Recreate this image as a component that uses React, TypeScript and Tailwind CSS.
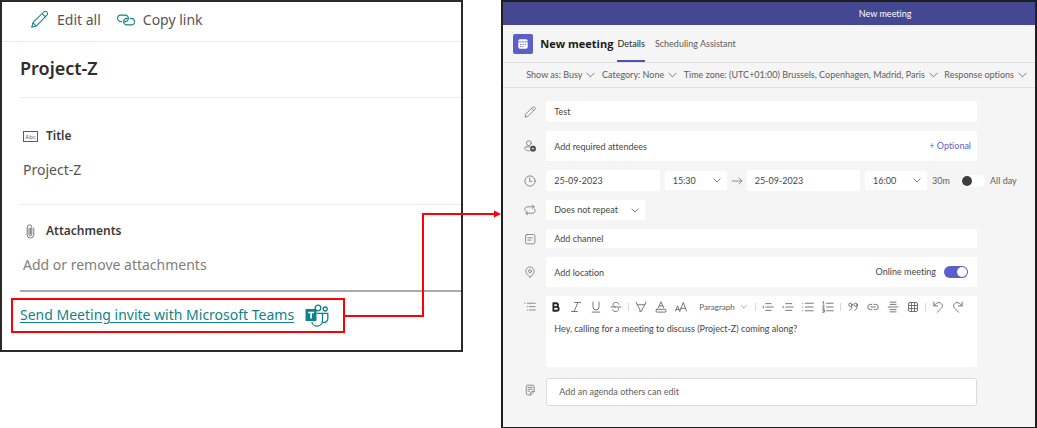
import type { ReactNode } from "react";

const TEAL = "#0f8387";

type IconProps = {
  children: ReactNode;
  className?: string;
  box?: string;
  stroke?: number;
};

function Icon({ children, className = "size-3", box = "0 0 16 16", stroke = 1.1 }: IconProps) {
  return (
    <svg
      aria-hidden="true"
      viewBox={box}
      className={`shrink-0 ${className}`}
      fill="none"
      stroke="currentColor"
      strokeWidth={stroke}
      strokeLinecap="round"
      strokeLinejoin="round"
    >
      {children}
    </svg>
  );
}

function Chevron({ className = "h-[6px] w-[9px]" }: { className?: string }) {
  return (
    <Icon box="0 0 10 6" className={className} stroke={0.9}>
      <path d="M1 1l4 4 4-4" />
    </Icon>
  );
}

function TeamsLogo() {
  return (
    <svg aria-hidden="true" viewBox="0 0 24 23" className="h-[23px] w-6 shrink-0" fill="none" stroke={TEAL} strokeWidth="1.3">
      <circle cx="13" cy="4" r="2.8" />
      <circle cx="20.2" cy="5" r="2" />
      <path d="M11.5 9.4h6v7.4a5.4 5.4 0 0 1-10.7 1" />
      <path d="M17.5 9.4h5.3v5.4a3.9 3.9 0 0 1-5.3 3.4" />
      <rect x="0.5" y="5" width="11" height="12" rx="0.8" fill={TEAL} stroke="none" />
      <path d="M3.2 8.5h5.8M6.1 8.5v6" stroke="#fff" strokeWidth="1.7" />
    </svg>
  );
}

function ItemPanel() {
  return (
    <section className="min-w-0 flex-[463] border-2 border-[#2b2b2b] bg-white pb-[17px] font-['Noto_Sans','Open_Sans',sans-serif] text-[#575553]">
      <div className="flex h-10 items-center gap-3 border-b border-[#ebebeb] pb-1 pl-7 text-[14px]">
        <button type="button" className="flex items-center gap-2">
          <Icon className="size-[19px] text-[#0f8387]" box="0 0 20 20" stroke={1.1}>
            <path d="M1.8 18.2l1.3-4.8L14.4 2.1a2.3 2.3 0 0 1 3.4 3.4L6.6 16.9zM3.1 13.4l3.5 3.5M12.8 3.7l3.5 3.500" />
          </Icon>
          Edit all
        </button>
        <button type="button" className="ml-1 flex items-center gap-2">
          <Icon className="h-3 w-[18px] text-[#0f8387]" box="0 0 18 12" stroke={1.1}>
            <path d="M4.600 7.600H3.800A3.200 3.200 0 0 1 3.800 1.100H8.200A3.200 3.200 0 0 1 11.300 5.200C10.900 6.800 9.600 7.600 8.200 7.600H7.600" />
            <path d="M13.400 4.400h.8a3.200 3.200 0 0 1 0 6.500H9.800A3.200 3.200 0 0 1 6.700 6.800C7.100 5.200 8.400 4.400 9.800 4.400h.6" />
          </Icon>
          Copy link
        </button>
      </div>

      <div className="pl-[18px]">
        <h1 className="flex h-14 items-center border-b border-[#ebebeb] pb-0.5 text-[18px] font-semibold text-[#2f2e2d]">
          Project-Z
        </h1>

        <dl>
          <div className="h-[107px] border-b border-[#ebebeb] pt-7 pl-[3px]">
            <dt className="flex h-5 items-center gap-2 text-[12px] font-semibold text-[#3b3a39]">
              <svg aria-hidden="true" viewBox="0 0 15 11" className="h-[11px] w-[15px]">
                <rect x="0.5" y="0.5" width="14" height="10" fill="none" stroke="#605e5c" />
                <text x="7.5" y="7.8" textAnchor="middle" fontSize="6" fontWeight="400" fill="#605e5c">Abc</text>
              </svg>
              Title
            </dt>
            <dd className="mt-[13px] flex h-5 items-center text-[14px]">Project-Z</dd>
          </div>
          <div className="h-[87px] border-b-2 border-[#ababab] pt-4 pl-[3px]">
            <dt className="flex h-5 items-center gap-2 text-[12px] font-semibold text-[#3b3a39]">
              <Icon className="h-[15px] w-[15px] text-[#7a7876]" box="0 0 15 15" stroke={1}>
                <path d="M6 4.2v6.2a1.4 1.4 0 0 0 2.8 0V3.2a2.3 2.3 0 0 0-4.6 0v7.6a3.3 3.3 0 0 0 6.6 0V4.2M7.4 4.2v6" />
              </Icon>
              Attachments
            </dt>
            <dd className="mt-[13px] flex h-5 items-center text-[14px] text-[#807e7c]">Add or remove attachments</dd>
          </div>
        </dl>
      </div>

      <div className="relative mt-[6px] ml-[9px] flex h-[35px] w-[334px] items-center gap-[11px] border-2 border-[#fb0007] pl-[7px]">
        <a href="#new-meeting" className="pb-0.5 text-[14px] whitespace-nowrap text-[#0f8387] underline underline-offset-2">
          Send Meeting invite with Microsoft Teams
        </a>
        <TeamsLogo />
        <svg
          aria-hidden="true"
          viewBox="0 0 158 108"
          className="absolute -top-[90px] left-full z-10 h-[108px] w-[158px]"
          fill="none"
          stroke="#fb0007"
          strokeWidth="2"
        >
          <path d="M0 106h80V4H152" />
          <path d="M151 .5L158 4l-7 3.5z" fill="#fb0007" stroke="none" />
        </svg>
      </div>
    </section>
  );
}

function OptionButton({ children }: { children: ReactNode }) {
  return (
    <button type="button" className="flex items-center gap-1 whitespace-nowrap">
      {children}
      <Chevron />
    </button>
  );
}

function Row({ id, icon, children }: { id: string; icon: ReactNode; children: ReactNode }) {
  return (
    <div className="flex gap-2 pr-[58px]">
      <label htmlFor={id} className="flex w-4 shrink-0 items-center justify-center text-[#777]">
        {icon}
      </label>
      {children}
    </div>
  );
}

const field = "min-w-0 rounded-[2px] bg-white px-2 outline-none placeholder:text-[#484644]";

function TimeSelect({ id, label, value, options, className }: { id: string; label: string; value: string; options: string[]; className: string }) {
  return (
    <div className={`relative shrink-0 ${className}`}>
      <select id={id} aria-label={label} defaultValue={value} className="size-full appearance-none rounded-[2px] bg-white px-2 outline-none">
        {options.map((o) => (
          <option key={o}>{o}</option>
        ))}
      </select>
      <span className="pointer-events-none absolute inset-y-0 right-[6px] flex items-center">
        <Chevron className="h-[5px] w-2" />
      </span>
    </div>
  );
}

function Tool({ label, children }: { label: string; children: ReactNode }) {
  return (
    <button type="button" aria-label={label} className="flex h-5 w-5 shrink-0 items-center justify-center">
      {children}
    </button>
  );
}

function Divider() {
  return (
    <span className="flex w-[5px] shrink-0 justify-center">
      <span className="h-2 w-px bg-[#d6d6d6]" />
    </span>
  );
}

function Toolbar() {
  return (
    <div role="toolbar" aria-label="Formatting" className="flex h-[21px] items-center text-[#5c5c5c]">
      <Tool label="Bold">
        <Icon className="size-3 text-[#242424]" stroke={2.4}>
          <path d="M4.500 3h3.800a2.300 2.300 0 0 1 0 4.700H4.500zM4.500 7.700h4.500a2.600 2.600 0 0 1 0 5.300h-4.500z" />
        </Icon>
      </Tool>
      <Tool label="Italic">
        <Icon><path d="M6 2h8M2 14h8M10.500 2l-5 12" /></Icon>
      </Tool>
      <Tool label="Underline">
        <Icon><path d="M4 1.500v6.500a4 4 0 0 0 8 0V1.500M3 14.800h10" /></Icon>
      </Tool>
      <Tool label="Strikethrough">
        <Icon><path d="M12 4.500C11 .8 4 .8 4 4.800 4 6.500 5 7.300 7 8M1.500 8h13M11 9.500c2.500 5-6.500 6.500-7.500 2" /></Icon>
      </Tool>
      <Divider />
      <Tool label="Highlight">
        <Icon><path d="M1.500 1.500L3 5h10l1.500-3.500M3 5l3.500 6v3.500l3-1.800V11L13 5" /></Icon>
      </Tool>
      <Tool label="Font color">
        <Icon><path d="M4.500 9L8 1l3.500 8M5.700 6.500h4.600" /><rect x="1.500" y="11" width="13" height="3.800" rx="1" /></Icon>
      </Tool>
      <Tool label="Font size">
        <Icon><path d="M.8 13.500l2.700-7 2.700 7M1.700 11.200h3.600M6.500 13.500L11 2l4.500 11.500M8 9.800h6" /></Icon>
      </Tool>
      <button type="button" className="flex w-[62px] shrink-0 items-center gap-[6px] pl-2 text-[8px]">
        Paragraph
        <Chevron className="h-1 w-[6px]" />
      </button>
      <Divider />
      <Tool label="Decrease indent">
        <Icon><path d="M5 3.500h7M5 8h10M5 12.500h7M2.200 6.800L1 8l1.200 1.200" /></Icon>
      </Tool>
      <Tool label="Increase indent">
        <Icon><path d="M5 3.500h8M5 8h10M5 12.500h8M1 6.800L2.200 8 1 9.200" /></Icon>
      </Tool>
      <Tool label="Bulleted list">
        <Icon><path d="M4.500 3H15M4.500 8H15M4.500 13H15M1 3h.2M1 8h.2M1 13h.2" /></Icon>
      </Tool>
      <Tool label="Numbered list">
        <Icon><path d="M6 3h9M6 8h9M6 13h9M1 1.500l1.200-.5v3.500M1 6.500h2L1 9.500h2M1 11.500h2v3.500H1M1.500 13.200H3" /></Icon>
      </Tool>
      <Divider />
      <Tool label="Quote">
        <Icon>
          <circle cx="4.500" cy="5" r="2.200" />
          <path d="M6.700 5c0 3.500-.8 6-3.200 7.500" />
          <circle cx="11.500" cy="5" r="2.200" />
          <path d="M13.700 5c0 3.500-.8 6-3.200 7.500" />
        </Icon>
      </Tool>
      <Tool label="Insert link">
        <Icon><path d="M6.500 4.500H4.500a3.500 3.500 0 0 0 0 7h2M9.500 4.500h2a3.500 3.500 0 0 1 0 7h-2M5 8h6" /></Icon>
      </Tool>
      <Tool label="Insert horizontal rule">
        <Icon><path d="M4 1.500h8M4 4.500h8M1.500 8h13M4 11.500h8M4 14.500h8" /></Icon>
      </Tool>
      <Tool label="Insert table">
        <Icon><rect x="2" y="2" width="12" height="12" rx="2" /><path d="M6 2v12M10 2v12M2 6h12M2 10h12" /></Icon>
      </Tool>
      <Divider />
      <Tool label="Undo">
        <Icon><path d="M2.500 1.500v5h5M2.500 6.500C5 3 8.500.8 11.800 3c3 2.200 2.400 5 .2 7L7 15" /></Icon>
      </Tool>
      <Tool label="Redo">
        <Icon><path d="M13.500 1.500v5h-5M13.500 6.500C11 3 7.500.8 4.200 3c-3 2.200-2.400 5-.2 7L9 15" /></Icon>
      </Tool>
    </div>
  );
}

const toggle =
  "relative h-3 w-6 shrink-0 appearance-none rounded-full bg-white before:absolute before:top-px before:left-px before:size-[10px] before:rounded-full before:bg-[#3d3d3d] checked:bg-[#5b5fc7] checked:before:left-[13px] checked:before:bg-white";

function MeetingForm() {
  return (
    <form className="flex flex-col gap-[9px] pt-[13px] pb-[21px] pl-[19px]">
      <Row
        id="subject"
        icon={<Icon><path d="M1.500 14.500l1-4L11.300 1.700a1.800 1.800 0 0 1 3 3L5.500 13.500zM10 3l3 3" /></Icon>}
      >
        <input id="subject" aria-label="Title" defaultValue="Test" className={`h-[21px] flex-1 ${field}`} />
      </Row>

      <Row
        id="attendees"
        icon={
          <Icon>
            <circle cx="6.500" cy="4.200" r="3.200" />
            <path d="M7.500 14.500C3 14.500 1 13 1 10.800c0-1 .6-1.800 1.600-1.800H8" />
            <circle cx="12" cy="11.500" r="3.800" fill="#3d3d3d" stroke="none" />
            <path d="M10.300 11.500h3.400M12 9.800v3.400" stroke="#f5f5f5" strokeWidth="0.800" />
          </Icon>
        }
      >
        <div className="flex h-[30px] min-w-0 flex-1 items-center rounded-[2px] bg-white pr-[6px]">
          <input id="attendees" aria-label="Required attendees" placeholder="Add required attendees" className={`h-full flex-1 ${field}`} />
          <button type="button" className="whitespace-nowrap text-[#5b5fc7]">+ Optional</button>
        </div>
      </Row>

      <div className="flex items-center pr-[19px]">
        <label htmlFor="start-date" className="mr-2 flex w-4 shrink-0 justify-center text-[#777]">
          <Icon><circle cx="8" cy="8" r="6.800" /><path d="M7.500 4v4.500h3" /></Icon>
        </label>
        <input id="start-date" aria-label="Start date" defaultValue="25-09-2023" className={`h-[21px] w-0 flex-1 ${field}`} />
        <TimeSelect id="start-time" label="Start time" value="15:30" options={["15:00", "15:30", "16:00"]} className="ml-[5px] h-[19px] w-[62px]" />
        <span className="flex w-5 shrink-0 justify-center text-[#777]">
          <Icon><path d="M1.500 8h13M10.500 4l4 4-4 4" /></Icon>
        </span>
        <input id="end-date" aria-label="End date" defaultValue="25-09-2023" className={`h-[21px] w-0 flex-1 ${field}`} />
        <TimeSelect id="end-time" label="End time" value="16:00" options={["15:30", "16:00", "16:30"]} className="ml-[5px] h-[19px] w-[62px]" />
        <span className="w-[34px] shrink-0 pl-[5px] text-[#616161]">30m</span>
        <input id="all-day" type="checkbox" role="switch" className={toggle} />
        <label htmlFor="all-day" className="w-[31px] shrink-0 pl-[5px] whitespace-nowrap text-[#616161]">All day</label>
      </div>

      <Row
        id="repeat"
        icon={<Icon><path d="M11 1.500l2.500 2.200L11 6M13.500 3.700H5a3.500 3.500 0 0 0-3 5.800M5 10l-2.500 2.300L5 14.500M2.500 12.300H11a3.500 3.500 0 0 0 3-5.800" /></Icon>}
      >
        <TimeSelect id="repeat" label="Recurrence" value="Does not repeat" options={["Does not repeat", "Daily", "Weekly"]} className="h-5 w-[99px]" />
      </Row>

      <Row
        id="channel"
        icon={<Icon><rect x="2" y="2" width="12.500" height="12.500" rx="2.200" /><path d="M5 6.500h6M5 9.500h4" /></Icon>}
      >
        <input id="channel" aria-label="Channel" placeholder="Add channel" className={`h-[19px] flex-1 ${field}`} />
      </Row>

      <Row
        id="location"
        icon={<Icon><path d="M8 15C5 12.500 2.500 9.800 2.500 6.800a5.500 5.500 0 0 1 11 0c0 3-2.500 5.700-5.500 8.200z" /><circle cx="8" cy="6.800" r="2" /></Icon>}
      >
        <div className="flex h-[30px] min-w-0 flex-1 items-center rounded-[2px] bg-white pr-[9px]">
          <input id="location" aria-label="Location" placeholder="Add location" className={`h-full flex-1 ${field}`} />
          <label htmlFor="online" className="mr-2 whitespace-nowrap">Online meeting</label>
          <input id="online" type="checkbox" role="switch" defaultChecked className={toggle} />
        </div>
      </Row>

      <div className="flex gap-2 pr-[58px]">
        <label htmlFor="details" className="flex h-[21px] w-4 shrink-0 items-center justify-center text-[#777]">
          <Icon><path d="M1 3h.5M4.500 3H15M4.500 7.500h.3M7 7.500h8M4.500 12h.3M7 12h8" /></Icon>
        </label>
        <div className="h-[71px] min-w-0 flex-1 overflow-hidden rounded-[2px] bg-white">
          <Toolbar />
          <textarea
            id="details"
            aria-label="Meeting details"
            defaultValue="Hey, calling for a meeting to discuss (Project-Z) coming along?"
            className="block h-[48px] w-full resize-none px-2 py-[6px] leading-3 outline-none"
          />
        </div>
      </div>

      <div className="mt-0.5 flex gap-2 pr-[58px]">
        <span className="flex w-4 shrink-0 items-center justify-center pb-1 text-[#777]">
          <Icon><path d="M3 3.500a2 2 0 0 1 2-2h6.500a2 2 0 0 1 2 2V10L9 14.500H5a2 2 0 0 1-2-2zM13.500 10H11a2 2 0 0 0-2 2v2.500M5.500 4.500h5.500M5.500 7h5.500M5.500 9.500h2" /></Icon>
        </span>
        <button type="button" className="h-7 flex-1 rounded-[3px] border border-[#dcdcdc] bg-white pl-3 text-left text-[#616161]">
          Add an agenda others can edit
        </button>
      </div>
    </form>
  );
}

function MeetingPanel() {
  return (
    <section id="new-meeting" className="min-w-0 flex-[536] border-2 border-[#1f1f1f] bg-[#f5f5f5] font-['Lato','Noto_Sans',sans-serif] text-[9px] leading-3 text-[#484644] [font-variant-ligatures:none]">
      <div className="flex h-[23px] items-center justify-center bg-[#444791] pl-[232px] text-white">New meeting</div>

      <header className="flex h-[38px] items-stretch border-b border-[#e0e0e0] pl-[10px]">
        <span className="flex size-5 self-center rounded-[2px] bg-[#5b5fc7] p-[5px]">
          <svg aria-hidden="true" viewBox="0 0 10 10" className="size-full">
            <path d="M.3 2.500V2A1.700 1.700 0 0 1 2 .3h6A1.700 1.700 0 0 1 9.700 2v.5z" fill="#fff" />
            <path d="M.3 3.300h9.400V8A1.700 1.700 0 0 1 8 9.700H2A1.700 1.700 0 0 1 .3 8z" fill="#fff" />
            <path d="M2.700 5.300h.1M5 5.300h.1M7.300 5.300h.1M2.700 7.500h.1M5 7.500h.1" stroke="#5b5fc7" strokeWidth="1.200" strokeLinecap="round" />
          </svg>
        </span>
        <h2 className="ml-[7px] self-center font-['Open_Sans','Noto_Sans',sans-serif] text-[11px] leading-4 font-bold whitespace-nowrap text-[#1b1b1b]">New meeting</h2>
        <nav className="ml-1 flex gap-[10px]">
          <a href="#details" className="flex items-center border-b-2 border-[#4f52b2] pt-0.5 font-medium text-[#333]">Details</a>
          <a href="#scheduling" className="flex items-center border-b-2 border-transparent pt-0.5 text-[#5c5c5c]">Scheduling Assistant</a>
        </nav>
      </header>

      <div className="flex h-[25px] items-center justify-between border-b border-[#e0e0e0] pr-2 pl-[23px] text-[#5c5c5c]">
        <OptionButton>Show as: Busy</OptionButton>
        <OptionButton>Category: None</OptionButton>
        <OptionButton>Time zone: (UTC+01:00) Brussels, Copenhagen, Madrid, Paris</OptionButton>
        <OptionButton>Response options</OptionButton>
      </div>

      <MeetingForm />
    </section>
  );
}

export default function App() {
  return (
    <main className="flex items-start gap-[38px] bg-white">
      <ItemPanel />
      <MeetingPanel />
    </main>
  );
}
